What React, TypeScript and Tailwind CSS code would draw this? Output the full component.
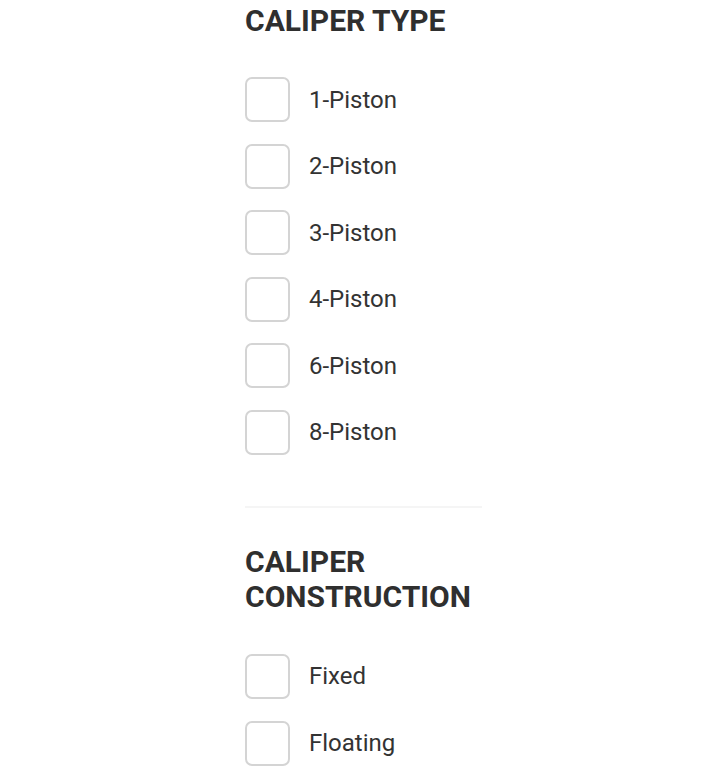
import React from 'react';

const caliperTypes = ['1-Piston', '2-Piston', '3-Piston', '4-Piston', '6-Piston', '8-Piston'];
const constructions = ['Fixed', 'Floating'];

const Checkbox: React.FC<{ label: string }> = ({ label }) => (
  <label className="flex items-center gap-[19px] cursor-pointer">
    <span className="w-[45px] h-[45px] rounded-[7px] border-2 border-[#d4d4d4] bg-white shrink-0" />
    <span className="text-[24px] leading-none text-[#333333]">{label}</span>
  </label>
);

const App: React.FC = () => {
  return (
    <div className="min-h-screen bg-white" style={{ fontFamily: 'Roboto, "Liberation Sans", sans-serif' }}>
      <div className="w-[237px] ml-[245px] pt-[3px]">
        {/* Caliper type */}
        <h2 className="text-[30px] leading-[36px] font-bold text-[#2f2f2f] uppercase">Caliper Type</h2>
        <div className="mt-[38px] flex flex-col gap-[21.6px]">
          {caliperTypes.map(t => (
            <Checkbox key={t} label={t} />
          ))}
        </div>

        <div className="mt-[51px] h-[2px] bg-[#f5f5f5]" />

        {/* Caliper construction */}
        <h2 className="mt-[36px] text-[30px] leading-[35px] font-bold text-[#2f2f2f] uppercase">
          Caliper<br />Construction
        </h2>
        <div className="mt-[40px] flex flex-col gap-[21.6px]">
          {constructions.map(t => (
            <Checkbox key={t} label={t} />
          ))}
        </div>
      </div>
    </div>
  );
};

export default App;
